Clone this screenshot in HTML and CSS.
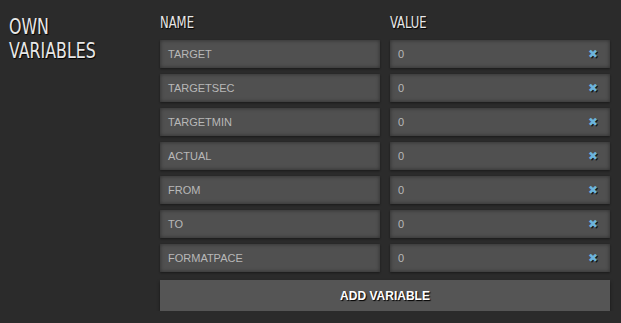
FILE: index.html
```html
<!DOCTYPE html>
<html lang="en">
<head>
    <meta charset="UTF-8">
    <link rel="stylesheet" href="styles.css">
    <title>Own variables</title>
</head>
<body>
    <div class="section">
        <div class="title">OWN<br>VARIABLES</div>
        <div class="vars">
            <div class="row head">
                <div class="col"><span>NAME</span></div>
                <div class="col"><span>VALUE</span></div>
            </div>
            <div class="row">
                <div class="field">TARGET</div>
                <div class="field value">0<span class="del">&#x2716;</span></div>
            </div>
            <div class="row">
                <div class="field">TARGETSEC</div>
                <div class="field value">0<span class="del">&#x2716;</span></div>
            </div>
            <div class="row">
                <div class="field">TARGETMIN</div>
                <div class="field value">0<span class="del">&#x2716;</span></div>
            </div>
            <div class="row">
                <div class="field">ACTUAL</div>
                <div class="field value">0<span class="del">&#x2716;</span></div>
            </div>
            <div class="row">
                <div class="field">FROM</div>
                <div class="field value">0<span class="del">&#x2716;</span></div>
            </div>
            <div class="row">
                <div class="field">TO</div>
                <div class="field value">0<span class="del">&#x2716;</span></div>
            </div>
            <div class="row">
                <div class="field">FORMATPACE</div>
                <div class="field value">0<span class="del">&#x2716;</span></div>
            </div>
            <button class="add">ADD VARIABLE</button>
        </div>
    </div>
</body>
</html>
```

FILE: styles.css
```css
*{
    margin: 0;
    padding: 0;
    box-sizing: border-box;
}
body{
    background: #2b2b2b;
    font-family: "Liberation Sans", Arial, sans-serif;
}
.section{
    display: flex;
    padding: 15px 11px 0 9px;
}
.title{
    width: 151px;
    font-family: "DejaVu Sans Condensed", sans-serif;
    font-size: 22px;
    line-height: 24px;
    color: #e8e8e8;
    text-shadow: 1px 1px 1px #000;
    transform: scaleX(0.8);
    transform-origin: left top;
}
.vars{
    flex: 1;
    display: flex;
    flex-direction: column;
    gap: 6px;
}
.row{
    display: flex;
    gap: 10px;
}
.head{
    height: 19px;
}
.head .col{
    flex: 1;
    font-family: "DejaVu Sans Condensed", sans-serif;
    font-size: 15px;
    line-height: 16px;
    color: #e8e8e8;
    text-shadow: 1px 1px 1px #000;
}
.head .col span{
    display: inline-block;
    transform: scaleX(0.86);
    transform-origin: left top;
}
.field{
    flex: 1;
    height: 28px;
    display: flex;
    align-items: center;
    padding: 0 8px;
    background: #505050;
    box-shadow: inset 0 0 4px rgba(0, 0, 0, 0.45), 0 1px 2px rgba(0, 0, 0, 0.4);
    color: #b8b8b8;
    font-size: 11px;
}
.value{
    justify-content: space-between;
}
.del{
    color: #6cb4dc;
    font-size: 12px;
    margin-right: 4px;
    text-shadow: 1px 1px 0 #111;
}
.add{
    height: 31px;
    margin-top: 2px;
    border: 0;
    background: #555555;
    color: #fff;
    font-family: "Liberation Sans", Arial, sans-serif;
    font-size: 12px;
    font-weight: bold;
    text-shadow: 1px 1px 1px #000;
    box-shadow: 0 2px 3px rgba(0, 0, 0, 0.5);
}
```
